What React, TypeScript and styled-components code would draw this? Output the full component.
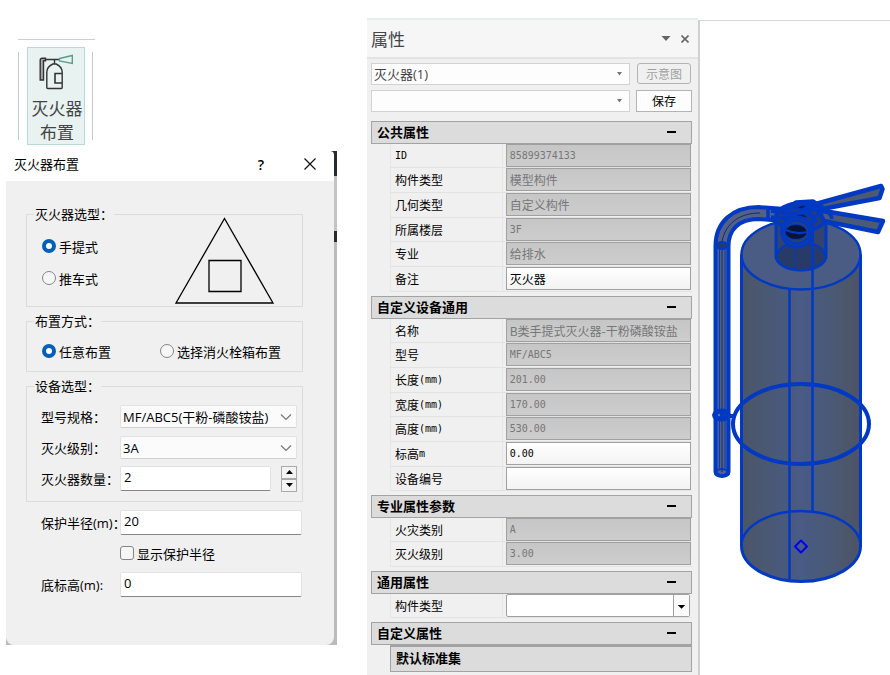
import React, { useId, useState } from "react";
import styled, { createGlobalStyle, css } from "styled-components";

const ui = `"Open Sans", "Noto Sans CJK SC", sans-serif`;
const cjk = `"Noto Sans CJK SC", sans-serif`;
const mono = `"DejaVu Sans Mono", "Noto Sans CJK SC", monospace`;

const GlobalStyle = createGlobalStyle`
  *, *::before, *::after { box-sizing: border-box; }
  body { margin: 0; background: #fff; color: #000; font-family: ${cjk}; font-size: 13px; }
  button, input, select { font: inherit; color: inherit; margin: 0; }
`;

const Page = styled.main`
  display: grid;
  grid-template-columns: minmax(337px, 367fr) minmax(320px, 331fr) minmax(150px, 192fr);
  min-height: 100vh;
`;

/* ---------- ribbon ---------- */
const LeftColumn = styled.div`
  padding-top: 39px;
`;
const Ribbon = styled.div`
  display: flex;
  align-items: center;
  justify-content: space-between;
  width: 77px;
  margin-left: 18px;
  padding: 7px 2px 0 0;
  border-top: 1px solid #cfcfcf;
`;
const Divider = styled.span`
  width: 1px;
  height: 88px;
  background: #c9c9c9;
`;
const RibbonButton = styled.button`
  display: flex;
  flex-direction: column;
  align-items: center;
  width: 58px;
  padding: 6px 0 0;
  border: 1px solid #b7dcd3;
  background: #e8f2f0;
  color: #444;
  font-family: ${cjk};
  font-size: 17px;
  line-height: 24px;
`;
const RibbonText = styled.span`
  padding-left: 3px;
  white-space: pre-line;
`;

/* ---------- dialog ---------- */
const Dialog = styled.section`
  width: 331px;
  margin: 6px 0 0 6px;
  padding-right: 3px;
  background: linear-gradient(#252b33 0 25px, #c4c4c4 25px 80px, #2a2a2a 80px 91px, #b9bcbc 91px);
`;
const DialogTitle = styled.header`
  display: flex;
  align-items: center;
  height: 30px;
  padding: 0 15px 4px 8px;
  background: #fff;
  border-top-right-radius: 4px;
`;
const DialogName = styled.h1`
  flex: 1;
  margin: 0;
  font-size: 13px;
  font-weight: 400;
  line-height: 20px;
`;
const TitleButton = styled.button`
  display: grid;
  place-items: center;
  width: 48px;
  height: 24px;
  padding: 0;
  border: 0;
  background: none;
  font-family: "Open Sans", sans-serif;
  font-size: 14px;
  font-weight: 600;
  &:last-child { width: 18px; margin-left: 16px; }
`;
const DialogBody = styled.form`
  display: flex;
  flex-direction: column;
  gap: 6px;
  padding: 25px 31px 47px 20px;
  background: #f0f0f0;
  border-radius: 0 0 8px 8px;
`;
const Group = styled.fieldset`
  min-width: 0;
  margin: 0;
  padding: 0 5px 0 14px;
  border: 1px solid #dcdcdc;
`;
const Legend = styled.legend`
  margin-left: -7px;
  padding: 0 1px;
  line-height: 16px;
`;
const TypeRow = styled.div`
  display: flex;
  justify-content: space-between;
  padding-right: 22px;
`;
const TypeChoices = styled.div`
  padding: 8px 0 12px 1px;
`;
const Triangle = styled.svg`
  width: 100px;
  height: 88px;
  margin-top: -6px;
`;
const ModeRow = styled.div`
  display: flex;
  gap: 49px;
  padding: 6px 0 4px 1px;
`;
const Choice = styled.label`
  display: flex;
  align-items: center;
  gap: 3px;
  height: 32px;
`;
const Radio = styled.input.attrs({ type: "radio" })`
  appearance: none;
  width: 14px;
  height: 14px;
  border: 1px solid #858585;
  border-radius: 50%;
  background: #f6f6f6;
  &:checked { border: 4px solid #005fb8; background: #fff; }
`;
const Check = styled.input.attrs({ type: "checkbox" })`
  appearance: none;
  width: 14px;
  height: 14px;
  border: 1px solid #858585;
  border-radius: 3px;
  background: #f6f6f6;
  &:checked { background: #005fb8; }
`;
const Row = styled.div<{ $inset?: boolean; $height: number }>`
  display: flex;
  align-items: center;
  height: ${(p) => p.$height}px;
  padding-left: ${(p) => (p.$inset ? 15 : 0)}px;
`;
const RowLabel = styled.label`
  flex: none;
  width: 79px;
  font-family: ${ui};
  white-space: nowrap;
`;
const field = css`
  border: 1px solid #e2e2e2;
  border-radius: 2px;
  font-family: ${ui};
  font-size: 12px;
`;
const SelectWrap = styled.span`
  display: grid;
  flex: 1;
  min-width: 0;
  align-items: center;
  > * { grid-area: 1 / 1; }
  > svg { justify-self: end; pointer-events: none; }
`;
const Select = styled.select`
  ${field}
  appearance: none;
  width: 100%;
  height: 23px;
  padding: 0 18px 0 2px;
  border-bottom-color: #cfcfcf;
  background: #fbfbfb;
  font-size: 13px;
`;
const Chevron = styled.svg`
  width: 18px;
  height: 8px;
  padding-right: 4px;
`;
const TextBox = styled.input`
  ${field}
  flex: 1;
  min-width: 0;
  height: 25px;
  padding: 0 3px 3px;
  border-bottom-color: #868686;
  background: #fff;
  font-size: 13px;
`;
const Spinner = styled.span`
  display: grid;
  grid-template-rows: 13px 13px;
  width: 16px;
  margin-left: 10px;
`;
const SpinButton = styled.button`
  display: grid;
  place-items: center;
  padding: 0;
  border: 1px solid #a9a9a9;
  background: #f3f3f3;
`;
const Fields = styled.div`
  padding: 7px 0 7px;
`;
const LooseFields = styled.div`
  padding-right: 1px;
`;
const CheckRow = styled.div`
  display: flex;
  align-items: center;
  height: 34px;
  padding: 0 0 0 94px;
`;

/* ---------- property panel ---------- */
const Panel = styled.section`
  margin-top: 18px;
  background: #f0f0f0;
  border-top: 2px solid #e9edec;
`;
const PanelHeader = styled.header`
  display: flex;
  align-items: center;
  gap: 9px;
  height: 39px;
  padding: 0 8px 0 4px;
  border-bottom: 2px solid #e3e3e3;
  background: #f6f6f6;
`;
const PanelTitle = styled.h2`
  flex: 1;
  margin: 0;
  color: #444;
  font-size: 17px;
  font-weight: 400;
  line-height: 24px;
`;
const IconButton = styled.button`
  display: grid;
  place-items: center;
  width: 10px;
  height: 14px;
  padding: 0;
  border: 0;
  background: none;
`;
const Tools = styled.div`
  display: grid;
  grid-template-columns: 1fr 56px;
  gap: 5px 6px;
  padding: 4px 6px 9px 4px;
`;
const PanelSelect = styled.select`
  appearance: none;
  width: 100%;
  height: 22px;
  padding: 0 18px 0 2px;
  border: 1px solid #d2d2d2;
  border-radius: 0;
  background: #fdfdfd;
  color: #444;
  font-family: ${ui};
  font-size: 13px;
`;
const Caret = styled.svg`
  width: 14px;
  height: 4px;
  padding-right: 7px;
`;
const ToolButton = styled.button`
  height: 22px;
  padding: 0;
  border: 1px solid #b4b4b4;
  background: #fdfdfd;
  font-size: 12px;
  line-height: 16px;
  &:disabled { height: 21px; border-radius: 3px; margin: 0 1px; background: #f0f0f0; color: #a0a0a0; }
`;
const Sections = styled.div`
  display: flex;
  flex-direction: column;
  gap: 4px;
  padding: 0 6px 3px 4px;
`;
const SectionHeader = styled.button`
  display: flex;
  align-items: center;
  justify-content: space-between;
  width: 100%;
  height: 23px;
  padding: 0 15px 2px 5px;
  border: 1px solid #a3a3a3;
  background: #dcdcdc;
  font-size: 13px;
  font-weight: 700;
  line-height: 16px;
`;
const Minus = styled.span`
  width: 9px;
  height: 2px;
  background: #000;
`;
const SubHeader = styled(SectionHeader)`
  width: auto;
  height: 27px;
  margin-left: 19px;
  align-self: stretch;
  border-top-width: 2px;
`;
const SubWrap = styled.div`
  display: flex;
  flex-direction: column;
`;
const Property = styled.div`
  display: grid;
  grid-template-columns: 112fr 190fr;
  height: 25px;
  margin-left: 19px;
  border-bottom: 1px solid #e2e2e2;
  border-left: 1px solid #e6e6e6;
  &:nth-child(3n + 1) { height: 24px; }
`;
const PropertyLabel = styled.label`
  display: flex;
  align-items: center;
  padding-left: 4px;
  border-right: 1px solid #e6e6e6;
  font-size: 12px;
  line-height: 16px;
`;
const Unit = styled.span`
  font-family: ${mono};
  font-size: 10px;
`;
const Value = styled.input<{ $latin?: boolean }>`
  width: calc(100% - 4px);
  height: 23px;
  min-width: 0;
  margin-left: 3px;
  padding: 0 3px;
  border: 1px solid #a0a0a0;
  border-radius: 0;
  background: linear-gradient(#fff, #f3f3f3);
  font-family: ${(p) => (p.$latin ? mono : cjk)};
  font-size: ${(p) => (p.$latin ? 10 : 12)}px;
  &:read-only { background: linear-gradient(#c6c6c6, #cdcdcd); color: #777; }
`;
const ValueSelectWrap = styled(SelectWrap)`
  margin: 0 2px 0 3px;
`;
const ValueSelect = styled.select`
  appearance: none;
  width: 100%;
  height: 23px;
  border: 1px solid #a0a0a0;
  border-radius: 2px;
  background: #fff;
`;
const DropArrow = styled.svg`
  width: 16px;
  height: 21px;
  margin-right: 1px;
  border-left: 1px solid #a0a0a0;
  background: #fafafa;
`;

/* ---------- model view ---------- */
const ModelView = styled.section`
  margin-top: 20px;
  border-top: 1px solid #d8d8d8;
  border-left: 2px solid #d0d0d0;
  padding-top: 157px;
`;
const ModelSvg = styled.svg`
  display: block;
  width: 100%;
  height: auto;
`;

const RibbonIcon = () => (
  <svg width="36" height="42" viewBox="0 0 36 42" fill="none" stroke="#333" strokeWidth="1.4" aria-hidden="true">
    <path d="M2.2 6.2q0-2 2-2h3.3v2.500H5.500V26H2.200Z" fill="#aaa" />
    <path d="M7 5.500h14M16.500 5.500V10M9.800 34.500q-1 0-1-1V18q0-5 6-8h3.400q6 3 6 8v15.500q0 1-1 1Z" />
    <path d="M24 19.500h-7v9.500h7" strokeWidth="1.600" />
    <path d="M21.500 4.500 34.300 1.500v8L21.500 7Z" stroke="#5c9c8c" />
  </svg>
);

const Extinguisher = () => (
  <ModelSvg viewBox="700 178 190 410" role="img" aria-label="灭火器">
    <defs>
      <linearGradient id="shell" x1="0" x2="1">
        <stop offset="0" stopColor="#4b5567" />
        <stop offset="0.200" stopColor="#4a5873" />
        <stop offset="0.500" stopColor="#495b86" />
        <stop offset="0.750" stopColor="#4a5976" />
        <stop offset="1" stopColor="#4d5463" />
      </linearGradient>
    </defs>
    <g stroke="#0039c4" fill="none" strokeLinejoin="round">
      <path d="M741.500 255v291a59.500 35.500 0 0 0 119 0V255Z" fill="url(#shell)" strokeWidth="3" />
      <ellipse cx="801" cy="254.500" rx="59.500" ry="35" fill="#4b5c84" strokeWidth="2.500" />
      <path d="M741.500 546a59.500 35 0 0 1 119 0" strokeWidth="2.500" />
      <path d="M776 214v42a25 14 0 0 0 50 0V214Z" fill="#33436b" strokeWidth="3" />
      <path d="M777 256a24 14 0 0 1 48 0" strokeWidth="2" fill="#283b68" />
      <path d="M777.500 256a23.500 13 0 0 0 47 0Z" fill="#283b68" stroke="none" />
      <path d="M795.500 238v31" strokeWidth="1" />
      <path d="M789.500 289v292M812.500 222v289" strokeWidth="2.500" />
      <ellipse cx="801" cy="424" rx="68" ry="40" strokeWidth="4" />

      <path d="M715.500 246c0-24 17-39 43-39l26 2v12l-26-2c-20 0-30 11-30 27v226a6.500 4 0 0 1-13 0Z" fill="#536188" strokeWidth="4" />
      <path d="M722 472V242c3-18 17-29 38-29" stroke="#142c68" strokeWidth="1" />
      <path d="M719.500 468V247M725 468V247" strokeWidth="1" />
      <ellipse cx="722" cy="245.500" rx="5.500" ry="3.500" fill="#243a70" strokeWidth="2" />
      <ellipse cx="722" cy="472" rx="5.500" ry="3" strokeWidth="2" />
      <ellipse cx="721.500" cy="415" rx="8" ry="5" fill="#0039c4" strokeWidth="3" />
      <circle cx="719" cy="415" r="1.200" fill="#657496" stroke="none" />
      <path d="M728 416h6" strokeWidth="4" />

      <ellipse cx="801" cy="217" rx="25" ry="14" fill="#273d72" strokeWidth="3.500" />
      <path d="M768 208v12M771 211l18 3M771 217l18 2" strokeWidth="3.500" />
      <path d="M812 205 881 186l1.500 3-3 9L822 209Z" fill="#4d5a75" strokeWidth="4.500" />
      <path d="M818 210 883 221l-5 11-54-11Z" fill="#4d5a75" strokeWidth="4.500" />
      <path d="m781 211 15-9 17-1 10 6M784 211l28-8M788 215l32-9M784 219l39-12M797 202l20 20M814 201l-20 21M811 222c8-13 19-13 21-3" strokeWidth="3.500" />
      <path d="m797 207 6-2 4 2-7 2ZM796 215l7-1 5 3-8 1Z" fill="#0b1d4c" strokeWidth="1" />
      <ellipse cx="797" cy="232" rx="15.500" ry="15" fill="#27407c" strokeWidth="3" />
      <ellipse cx="797" cy="232" rx="12.500" ry="11.500" strokeWidth="2.500" />
      <ellipse cx="796" cy="232" rx="11" ry="7.500" fill="#081437" strokeWidth="1" />
      <path d="M786 230q10 5 21 2" strokeWidth="2" />
      <path d="M812.500 222v30" strokeWidth="2.500" />
      <path d="m801 540.500 6 6-6 6-6-6Z" stroke="#0000f5" strokeWidth="2" />
    </g>
  </ModelSvg>
);

const ComboChevron = () => (
  <Chevron viewBox="0 0 14 8" fill="none" stroke="#777" strokeWidth="1.200" aria-hidden="true">
    <path d="m2 1.500 5 5 5-5" />
  </Chevron>
);
const PanelCaret = () => (
  <Caret viewBox="0 0 7 4" aria-hidden="true">
    <path d="M1 0h5L3.500 3.500Z" fill="#777" />
  </Caret>
);

type Prop = { name: string; unit?: string; value?: string; editable?: boolean; choice?: boolean };
const sections: { title: string; props: Prop[] }[] = [
  {
    title: "公共属性",
    props: [
      { name: "", unit: "ID", value: "85899374133" },
      { name: "构件类型", value: "模型构件" },
      { name: "几何类型", value: "自定义构件" },
      { name: "所属楼层", value: "3F" },
      { name: "专业", value: "给排水" },
      { name: "备注", value: "灭火器", editable: true },
    ],
  },
  {
    title: "自定义设备通用",
    props: [
      { name: "名称", value: "B类手提式灭火器-干粉磷酸铵盐" },
      { name: "型号", value: "MF/ABC5" },
      { name: "长度", unit: "(mm)", value: "201.00" },
      { name: "宽度", unit: "(mm)", value: "170.00" },
      { name: "高度", unit: "(mm)", value: "530.00" },
      { name: "标高", unit: "m", value: "0.00", editable: true },
      { name: "设备编号", value: "", editable: true },
    ],
  },
  {
    title: "专业属性参数",
    props: [
      { name: "火灾类别", value: "A" },
      { name: "灭火级别", value: "3.00" },
    ],
  },
  { title: "通用属性", props: [{ name: "构件类型", choice: true }] },
];

function PropertyRow({ item }: { item: Prop }) {
  const id = useId();
  return (
    <Property>
      <PropertyLabel htmlFor={id}>
        {item.name}
        {item.unit && <Unit>{item.unit}</Unit>}
      </PropertyLabel>
      {item.choice ? (
        <ValueSelectWrap>
          <ValueSelect id={id}>
            <option />
          </ValueSelect>
          <DropArrow viewBox="0 0 16 21" aria-hidden="true">
            <path d="M4 10h8l-4 4Z" />
          </DropArrow>
        </ValueSelectWrap>
      ) : (
        <Value
          id={id}
          defaultValue={item.value}
          readOnly={!item.editable}
          $latin={/^[\x20-\x7e]*$/.test(item.value ?? "")}
        />
      )}
    </Property>
  );
}

function PropertySection({ title, props }: { title: string; props: Prop[] }) {
  const [open, setOpen] = useState(true);
  return (
    <div>
      <SectionHeader type="button" aria-expanded={open} onClick={() => setOpen(!open)}>
        {title}
        <Minus />
      </SectionHeader>
      {open && (
        <div>
          {props.map((item, i) => (
            <PropertyRow key={i} item={item} />
          ))}
        </div>
      )}
    </div>
  );
}

function PlacementDialog() {
  const [count, setCount] = useState(2);
  return (
    <Dialog role="dialog" aria-labelledby="dialog-name">
      <DialogTitle>
        <DialogName id="dialog-name">灭火器布置</DialogName>
        <TitleButton type="button">?</TitleButton>
        <TitleButton type="button" aria-label="关闭">
          <svg width="12" height="12" viewBox="0 0 12 12" stroke="#111" strokeWidth="1.200">
            <path d="m.5.5 11 11m0-11-11 11" />
          </svg>
        </TitleButton>
      </DialogTitle>
      <DialogBody>
        <Group>
          <Legend>灭火器选型：</Legend>
          <TypeRow>
            <TypeChoices>
              <Choice><Radio name="kind" defaultChecked />手提式</Choice>
              <Choice><Radio name="kind" />推车式</Choice>
            </TypeChoices>
            <Triangle viewBox="0 0 100 88" fill="none" stroke="#000" strokeWidth="1.300" aria-hidden="true">
              <path d="M49.500 2.500 98 87H1Z" />
              <path d="M34 44.500h32v31H34Z" />
            </Triangle>
          </TypeRow>
        </Group>
        <Group>
          <Legend>布置方式：</Legend>
          <ModeRow>
            <Choice><Radio name="mode" defaultChecked />任意布置</Choice>
            <Choice><Radio name="mode" />选择消火栓箱布置</Choice>
          </ModeRow>
        </Group>
        <Group>
          <Legend>设备选型：</Legend>
          <Fields>
            <Row $height={31}>
              <RowLabel htmlFor="model">型号规格：</RowLabel>
              <SelectWrap>
                <Select id="model"><option>MF/ABC5(干粉-磷酸铵盐)</option></Select>
                <ComboChevron />
              </SelectWrap>
            </Row>
            <Row $height={31}>
              <RowLabel htmlFor="level">灭火级别：</RowLabel>
              <SelectWrap>
                <Select id="level"><option>3A</option></Select>
                <ComboChevron />
              </SelectWrap>
            </Row>
            <Row $height={31}>
              <RowLabel htmlFor="count">灭火器数量：</RowLabel>
              <TextBox id="count" value={count} onChange={(e) => setCount(Number(e.target.value) || 0)} />
              <Spinner>
                <SpinButton type="button" aria-label="增加" onClick={() => setCount(count + 1)}>
                  <svg width="7" height="4" viewBox="0 0 7 4"><path d="M0 4h7L3.500 0Z" /></svg>
                </SpinButton>
                <SpinButton type="button" aria-label="减少" onClick={() => setCount(Math.max(0, count - 1))}>
                  <svg width="7" height="4" viewBox="0 0 7 4"><path d="M0 0h7L3.500 4Z" /></svg>
                </SpinButton>
              </Spinner>
            </Row>
          </Fields>
        </Group>
        <LooseFields>
          <Row $height={28} $inset>
            <RowLabel htmlFor="radius">保护半径(m)：</RowLabel>
            <TextBox id="radius" defaultValue="20" />
          </Row>
          <CheckRow>
            <Choice><Check />显示保护半径</Choice>
          </CheckRow>
          <Row $height={28} $inset>
            <RowLabel htmlFor="base">底标高(m):</RowLabel>
            <TextBox id="base" defaultValue="0" />
          </Row>
        </LooseFields>
      </DialogBody>
    </Dialog>
  );
}

export default function App() {
  return (
    <>
      <GlobalStyle />
      <Page>
        <LeftColumn>
          <Ribbon>
            <Divider />
            <RibbonButton type="button">
              <RibbonIcon />
              <RibbonText>{"灭火器\n布置"}</RibbonText>
            </RibbonButton>
            <Divider />
          </Ribbon>
          <PlacementDialog />
        </LeftColumn>

        <Panel>
          <PanelHeader>
            <PanelTitle>属性</PanelTitle>
            <IconButton type="button" aria-label="菜单">
              <svg width="10" height="5" viewBox="0 0 10 5"><path d="M.5 0h9L5 5Z" fill="#666" /></svg>
            </IconButton>
            <IconButton type="button" aria-label="关闭">
              <svg width="8" height="8" viewBox="0 0 8 8" stroke="#666" strokeWidth="1.600"><path d="m.5.5 7 7m0-7-7 7" /></svg>
            </IconButton>
          </PanelHeader>
          <Tools>
            <SelectWrap>
              <PanelSelect aria-label="构件"><option>灭火器(1)</option></PanelSelect>
              <PanelCaret />
            </SelectWrap>
            <ToolButton type="button" disabled>示意图</ToolButton>
            <SelectWrap>
              <PanelSelect aria-label="方案"><option /></PanelSelect>
              <PanelCaret />
            </SelectWrap>
            <ToolButton type="button">保存</ToolButton>
          </Tools>
          <Sections>
            {sections.map((s) => (
              <PropertySection key={s.title} {...s} />
            ))}
            <SubWrap>
              <SectionHeader type="button">自定义属性<Minus /></SectionHeader>
              <SubHeader type="button">默认标准集</SubHeader>
            </SubWrap>
          </Sections>
        </Panel>

        <ModelView>
          <Extinguisher />
        </ModelView>
      </Page>
    </>
  );
}
